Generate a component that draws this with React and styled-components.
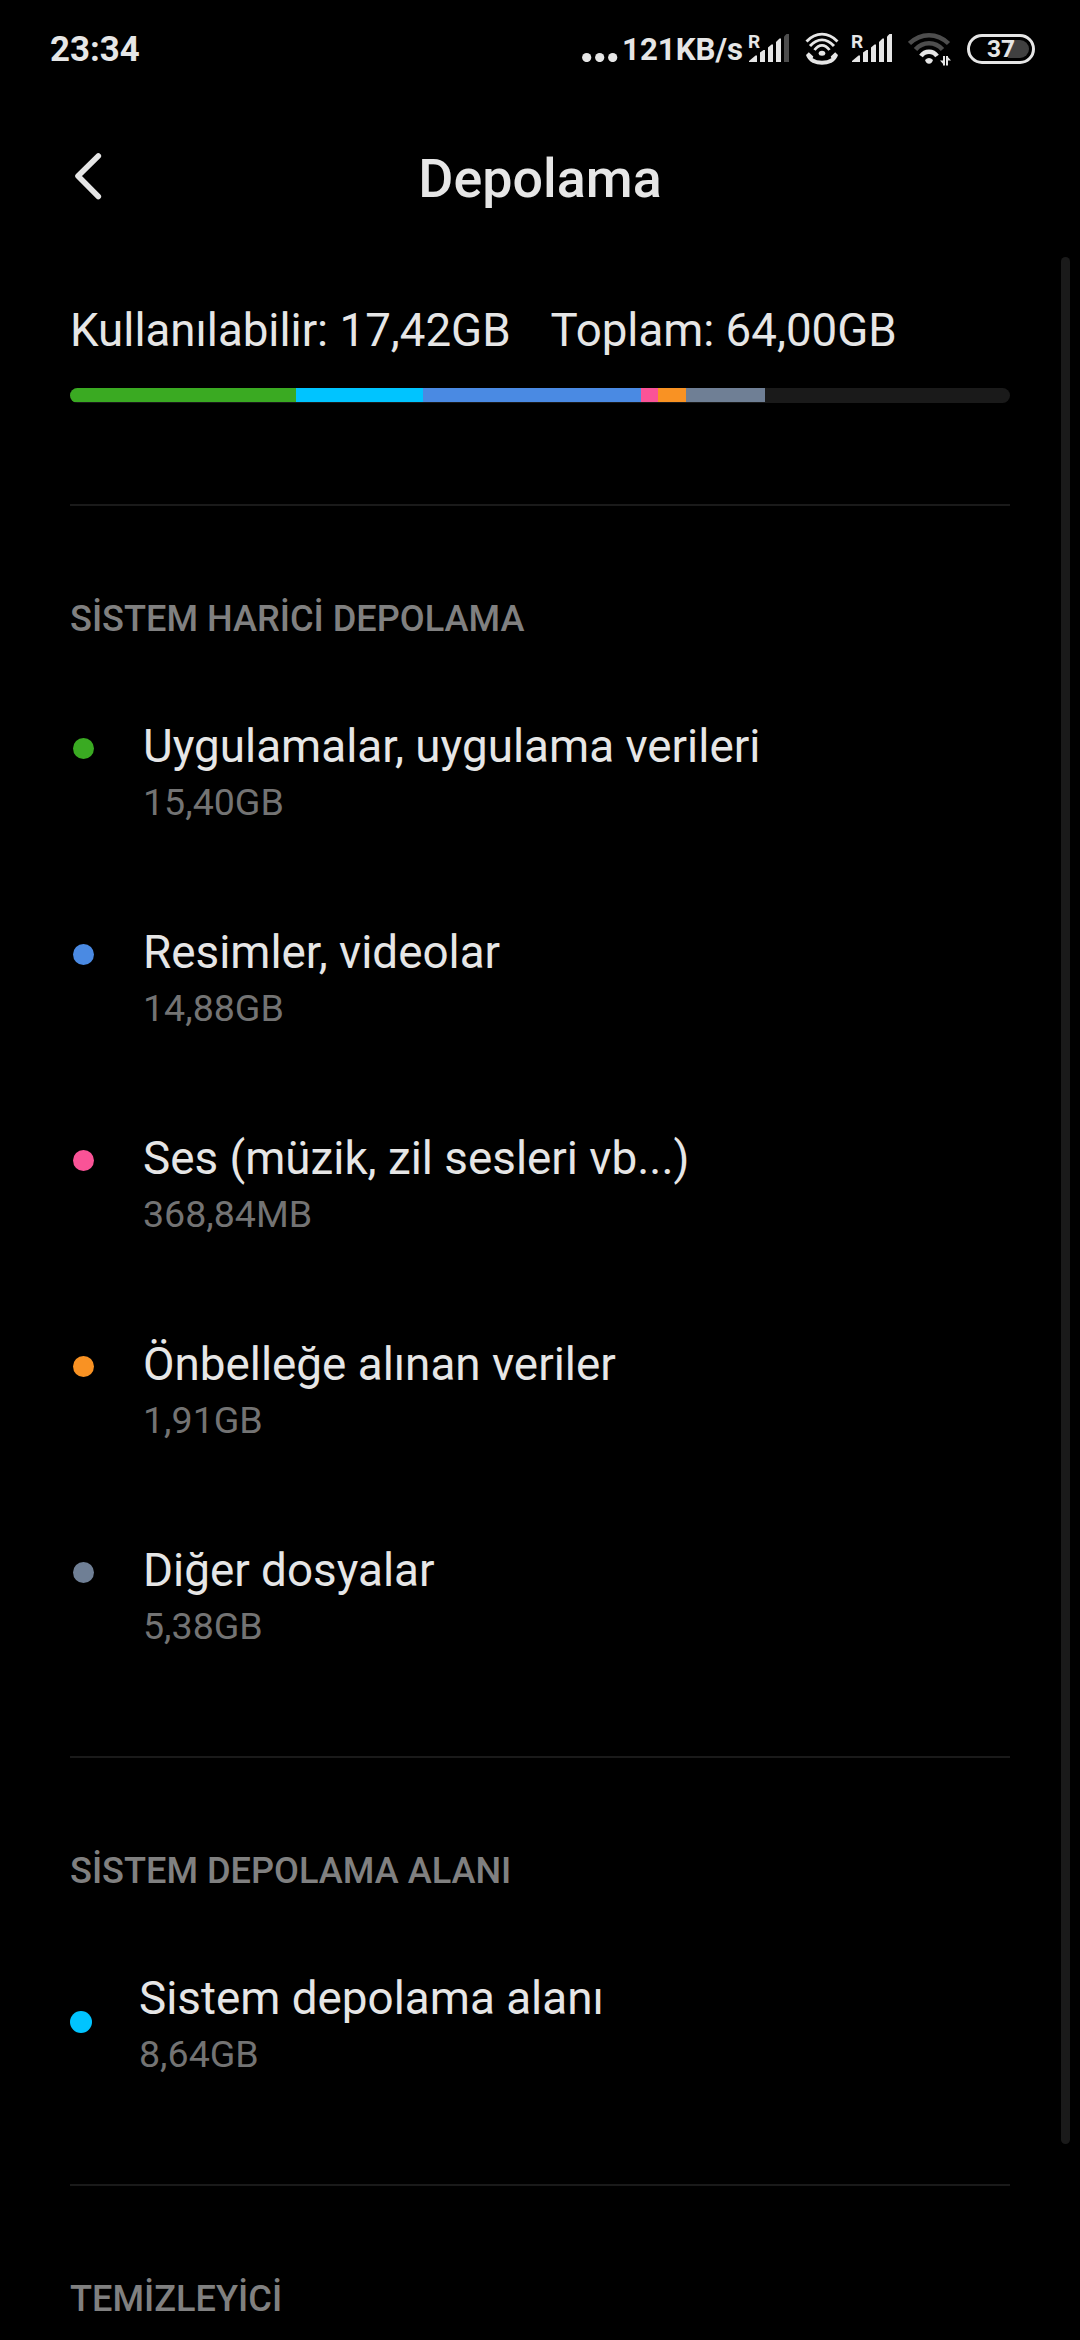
import React from "react";
import styled, { createGlobalStyle } from "styled-components";

const GlobalStyle = createGlobalStyle`
  * {
    box-sizing: border-box;
  }

  body {
    margin: 0;
    background-color: #000;
    overflow: hidden;
  }

  h1, h2, p {
    margin: 0;
  }
`;

const Container = styled.div`
  position: relative;
  width: 1080px;
  height: 2340px;
  overflow: hidden;
  background-color: #000;
  color: #e6e6e6;
  font-family: Roboto, sans-serif;
`;

const StatusBar = styled.div`
  display: flex;
  align-items: center;
  justify-content: space-between;
  height: 98px;
  padding: 0 45px 0 50px;
`;

const Clock = styled.span`
  font-size: 34.8px;
  font-weight: 700;
  line-height: 40px;
`;

const StatusIcons = styled.div`
  display: flex;
  align-items: center;

  svg {
    display: block;
  }
`;

const NetSpeed = styled.span`
  margin: 0 6px 0 4px;
  padding-top: 2px;
  font-size: 31.2px;
  font-weight: 700;
  line-height: 38px;
`;

const Signal = styled.div`
  position: relative;
  width: 40px;
  height: 30px;
  margin-right: 16px;

  span {
    position: absolute;
    left: -1px;
    top: -3px;
    font-size: 19px;
    font-weight: 700;
    line-height: 22px;
  }
`;

const CallIcon = styled.svg`
  width: 34px;
  height: 34px;
  margin-right: 13px;
`;

const Battery = styled.div`
  position: relative;
  display: flex;
  align-items: center;
  justify-content: center;
  width: 68px;
  height: 30px;
  margin-left: 16px;
  border: 3px solid #e6e6e6;
  border-radius: 15px;
  font-size: 24.5px;
  font-weight: 700;
  line-height: 28px;

  &::before {
    content: "";
    position: absolute;
    top: 3px;
    right: 3px;
    width: 21px;
    height: 18px;
    border-radius: 0 9px 9px 0;
    background-color: #404040;
  }

  span {
    position: relative;
  }
`;

const Header = styled.header`
  display: grid;
  grid-template-columns: 140px 1fr 140px;
  align-items: center;
  height: 161px;
`;

const BackBtn = styled.button`
  display: flex;
  width: 140px;
  padding: 0 0 5px 70px;
  border: none;
  background: none;
`;

const Title = styled.h1`
  text-align: center;
  font-size: 53.8px;
  font-weight: 500;
  line-height: 62px;
`;

const Content = styled.main`
  padding: 44px 70px 0;
`;

const Summary = styled.div`
  display: flex;
  gap: 40px;
  font-size: 45.65px;
  line-height: 56px;
  white-space: nowrap;
`;

const UsageBar = styled.div`
  display: flex;
  height: 15px;
  margin-top: 29px;
  border-radius: 7.5px;
  overflow: hidden;
  background-color: #1a1a1a;
`;

const Segment = styled.div`
  width: ${(props) => props.$width}px;
  height: 14px;
  background-color: ${(props) => props.$color};
`;

const Divider = styled.div`
  height: 2px;
  margin-top: ${(props) => props.$top || 57}px;
  background-color: #1a1a1a;
`;

const SectionTitle = styled.h2`
  margin: 92px 0 29px;
  color: #808080;
  font-size: 36.15px;
  font-weight: 500;
  line-height: 42px;
`;

const Row = styled.div`
  display: flex;
  height: 206px;
  padding: 50px 0 0 ${(props) => (props.$system ? 0 : 3)}px;
`;

const Dot = styled.div`
  width: ${(props) => (props.$system ? 22 : 21)}px;
  height: ${(props) => (props.$system ? 22 : 21)}px;
  margin-top: ${(props) => (props.$system ? 40 : 19)}px;
  margin-right: ${(props) => (props.$system ? 47 : 49)}px;
  border-radius: 50%;
  background-color: ${(props) => props.$color};
`;

const Name = styled.p`
  font-size: 45.8px;
  line-height: 56px;
`;

const Size = styled.p`
  margin-top: 5px;
  color: #737373;
  font-size: 37.6px;
  line-height: 44px;
`;

const ScrollThumb = styled.div`
  position: absolute;
  top: 257px;
  right: 10px;
  width: 9px;
  height: 1887px;
  border-radius: 5px;
  background-color: #1a1a1a;
`;

const segments = [
  { color: "#3aaa22", width: 226 },
  { color: "#00c4ff", width: 127 },
  { color: "#4a8ae3", width: 218 },
  { color: "#fa5397", width: 17 },
  { color: "#f99223", width: 28 },
  { color: "#6f7f95", width: 79 },
];

const files = [
  { name: "Uygulamalar, uygulama verileri", size: "15,40GB", color: "#3aaa22" },
  { name: "Resimler, videolar", size: "14,88GB", color: "#4a8ae3" },
  { name: "Ses (müzik, zil sesleri vb...)", size: "368,84MB", color: "#fa5397" },
  { name: "Önbelleğe alınan veriler", size: "1,91GB", color: "#f99223" },
  { name: "Diğer dosyalar", size: "5,38GB", color: "#6f7f95" },
];

function SignalIcon({ weak }) {
  return (
    <Signal>
      <span>R</span>
      <svg width="40" height="30" viewBox="0 0 40 30" fill="#e6e6e6">
        <path d="M0 28V27L6.5 21.5H8V28Z" />
        <path d="M11 28V18.5L14.5 16H16V28Z" />
        <path d="M19 28V13.5L22.5 10.5H24V28Z" />
        <path d="M27 28V8L30.5 4.5H32V28Z" />
        <path d="M35 28V2.5L38.5 -1H40V28Z" fill={weak ? "#4d4d4d" : "#e6e6e6"} />
      </svg>
    </Signal>
  );
}

function WifiCallIcon() {
  return (
    <CallIcon viewBox="0 0 34 34" fill="none" stroke="#e6e6e6" strokeWidth="2.8">
      <path d="M1.5 9.5Q8.5 2.2 17 2.2Q25.5 2.2 32.5 9.5" />
      <path d="M5 14Q10.5 7.8 17 7.8Q23.5 7.8 29 14" />
      <path d="M9.5 18Q13 13.3 17 13.3Q21 13.3 24.5 18" />
      <ellipse cx="17" cy="21.3" rx="3.3" ry="2.5" fill="#e6e6e6" stroke="none" />
      <path
        d="M3.8 20.2L8.3 24.6L7.6 26.2Q11.5 28.8 17 28.8Q22.5 28.8 26.4 26.2L25.7 24.6L30.2 20.2L33 23Q31.5 28 26.5 30.7Q22 32.7 17 32.7Q12 32.7 7.5 30.7Q2.5 28 1 23Z"
        fill="#e6e6e6"
        stroke="none"
      />
    </CallIcon>
  );
}

function WifiIcon() {
  return (
    <svg width="43" height="34" viewBox="0 0 43 34" fill="none" strokeWidth="4.5">
      <path d="M1.5 11.5Q10 3.2 21 3.2Q32 3.2 40.5 11.5" stroke="#4d4d4d" />
      <path d="M7.5 17.5Q13 11.2 21 11.2Q29 11.2 34.5 17.5" stroke="#4d4d4d" />
      <path d="M13 24Q16 19.8 21 19.8Q26 19.8 29 24" stroke="#e6e6e6" />
      <path d="M17 28Q21 24 25 28Q24 31.5 21 31.7Q18 31.5 17 28Z" fill="#e6e6e6" />
      <path d="M36 24V33.5M39 33.5V24" stroke="#e6e6e6" strokeWidth="2" />
      <path d="M36 33L32 28.5H36ZM39 24L43 28.5H39Z" fill="#e6e6e6" />
    </svg>
  );
}

function StorageRow({ name, size, color, system }) {
  return (
    <Row $system={system}>
      <Dot $color={color} $system={system} />
      <div>
        <Name>{name}</Name>
        <Size>{size}</Size>
      </div>
    </Row>
  );
}

function App() {
  return (
    <Container>
      <GlobalStyle />
      <StatusBar>
        <Clock>23:34</Clock>
        <StatusIcons>
          <svg width="36" height="26" viewBox="0 0 36 26" fill="#e6e6e6">
            <circle cx="4.7" cy="21.5" r="4.6" />
            <circle cx="17.7" cy="21.5" r="4.6" />
            <circle cx="30.7" cy="21.5" r="4.6" />
          </svg>
          <NetSpeed>121KB/s</NetSpeed>
          <SignalIcon weak />
          <WifiCallIcon />
          <SignalIcon />
          <WifiIcon />
          <Battery>
            <span>37</span>
          </Battery>
        </StatusIcons>
      </StatusBar>
      <Header>
        <BackBtn>
          <svg width="34" height="48" viewBox="0 0 34 48" fill="none">
            <path
              d="M28.3 4L8 24L28.3 44.5"
              stroke="#e6e6e6"
              strokeWidth="5.6"
              strokeLinecap="round"
              strokeLinejoin="round"
            />
          </svg>
        </BackBtn>
        <Title>Depolama</Title>
      </Header>
      <Content>
        <Summary>
          <span>Kullanılabilir: 17,42GB</span>
          <span>Toplam: 64,00GB</span>
        </Summary>
        <UsageBar>
          {segments.map((item) => (
            <Segment key={item.color} $color={item.color} $width={item.width} />
          ))}
        </UsageBar>
        <Divider $top={101} />
        <SectionTitle>SİSTEM HARİCİ DEPOLAMA</SectionTitle>
        {files.map((item) => (
          <StorageRow key={item.name} {...item} />
        ))}
        <Divider />
        <SectionTitle>SİSTEM DEPOLAMA ALANI</SectionTitle>
        <StorageRow name="Sistem depolama alanı" size="8,64GB" color="#00c4ff" system />
        <Divider />
        <SectionTitle>TEMİZLEYİCİ</SectionTitle>
      </Content>
      <ScrollThumb />
    </Container>
  );
}

export default App;
